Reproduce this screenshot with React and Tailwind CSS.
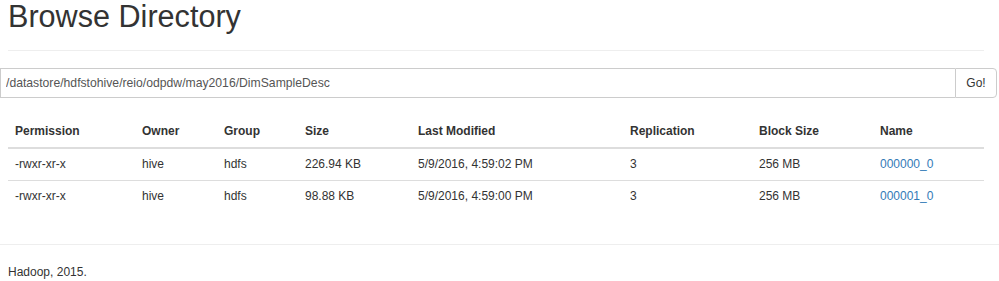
import React from "react";

const COLUMNS = [
  { label: "Permission", width: "w-[127px]" },
  { label: "Owner", width: "w-[82px]" },
  { label: "Group", width: "w-[81px]" },
  { label: "Size", width: "w-[113px]" },
  { label: "Last Modified", width: "w-[212px]" },
  { label: "Replication", width: "w-[129px]" },
  { label: "Block Size", width: "w-[121px]" },
  { label: "Name", width: "w-[111px]" },
];

const FILES = [
  {
    permission: "-rwxr-xr-x",
    owner: "hive",
    group: "hdfs",
    size: "226.94 KB",
    modified: "5/9/2016, 4:59:02 PM",
    replication: "3",
    blockSize: "256 MB",
    name: "000000_0",
  },
  {
    permission: "-rwxr-xr-x",
    owner: "hive",
    group: "hdfs",
    size: "98.88 KB",
    modified: "5/9/2016, 4:59:00 PM",
    replication: "3",
    blockSize: "256 MB",
    name: "000001_0",
  },
];

export default function App() {
  return (
    <div
      className="w-[999px] h-[281px] bg-white text-[#333] text-[12px] leading-[19px] overflow-hidden"
      style={{ fontFamily: '"Liberation Sans", Arial, sans-serif' }}
    >
      <div className="pl-[8px] pr-[15px]">
        <div className="h-[51px] border-b border-[#eee]">
          <h1 className="text-[30.6px] leading-[33px] font-normal">Browse Directory</h1>
        </div>
      </div>

      <div className="mt-[17px] pr-[2px] flex h-[30px]">
        <input
          className="flex-1 h-full border border-[#ccc] border-r-0 pl-[5px] text-[12.2px] text-[#555] outline-none"
          defaultValue="/datastore/hdfstohive/reio/odpdw/may2016/DimSampleDesc"
          style={{ fontFamily: '"Liberation Sans", Arial, sans-serif' }}
        />
        <button className="w-[42px] h-full border border-[#ccc] rounded-r-[4px] bg-white text-[#333] text-[12px]">
          Go!
        </button>
      </div>

      <div className="mt-[18px] pl-[8px] pr-[15px]">
        <table className="w-full table-fixed border-collapse">
          <thead>
            <tr className="border-b-2 border-[#ddd]">
              {COLUMNS.map((c) => (
                <th
                  key={c.label}
                  className={`${c.width} text-left font-bold px-[7px] py-[6px]`}
                >
                  {c.label}
                </th>
              ))}
            </tr>
          </thead>
          <tbody>
            {FILES.map((f, i) => (
              <tr key={f.name} className={i > 0 ? "border-t border-[#ddd]" : ""}>
                <td className="px-[7px] py-[6px]">{f.permission}</td>
                <td className="px-[7px] py-[6px]">{f.owner}</td>
                <td className="px-[7px] py-[6px]">{f.group}</td>
                <td className="px-[7px] py-[6px]">{f.size}</td>
                <td className="px-[7px] py-[6px]">{f.modified}</td>
                <td className="px-[7px] py-[6px]">{f.replication}</td>
                <td className="px-[7px] py-[6px]">{f.blockSize}</td>
                <td className="px-[7px] py-[6px]">
                  <a href="#" className="text-[#337ab7]">
                    {f.name}
                  </a>
                </td>
              </tr>
            ))}
          </tbody>
        </table>
      </div>

      <div className="mt-[32px] border-t border-[#eee] pt-[18px] pl-[8px]">
        <p>Hadoop, 2015.</p>
      </div>
    </div>
  );
}
